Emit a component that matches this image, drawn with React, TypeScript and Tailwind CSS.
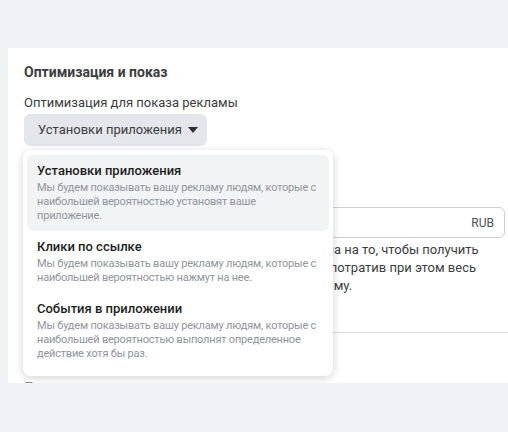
const options = [
  {
    title: "Установки приложения",
    text: "Мы будем показывать вашу рекламу людям, которые с наибольшей вероятностью установят ваше приложение.",
    active: true,
  },
  {
    title: "Клики по ссылке",
    text: "Мы будем показывать вашу рекламу людям, которые с наибольшей вероятностью нажмут на нее.",
    active: false,
  },
  {
    title: "События в приложении",
    text: "Мы будем показывать вашу рекламу людям, которые с наибольшей вероятностью выполнят определенное действие хотя бы раз.",
    active: false,
  },
];

const App = () => {
  return (
    <div
      className="w-[508px] h-[432px] bg-[#f0f2f5] pt-[48px] pl-[8px] overflow-hidden"
      style={{ fontFamily: "Roboto, 'Noto Sans', sans-serif" }}
    >
      <div className="relative h-[335px] bg-white overflow-hidden pl-4 pr-[3px] pt-[14px] text-[#1c1e21]">
        <h2 className="text-[14px] leading-[20px] font-bold text-[#3b3d40]">Оптимизация и показ</h2>
        <div className="mt-[11px] text-[13px] leading-[20px] text-[#3b3d40]">Оптимизация для показа рекламы</div>
        <button className="mt-px flex h-[32px] w-[183px] items-center gap-[6px] whitespace-nowrap rounded-md bg-[#e4e6eb] pl-[14px] text-[13px] text-[#3b3d40]">
          Установки приложения
          <svg width="10" height="6" viewBox="0 0 10 6">
            <path d="M0 0h10L5 6z" fill="#2d2f32" />
          </svg>
        </button>

        <div className="mt-[37px] text-[13px] leading-[20px] text-[#3b3d40]">Контроль затрат (необязательно)</div>
        <div className="mt-[4px] flex h-[31px] items-center justify-end rounded-md border border-[#ccd0d5] pr-[10px] text-[12px] text-[#4b4f56]">
          RUB
        </div>
        <p className="mt-[3px] whitespace-nowrap text-[13px] leading-[18px] text-[#3b3d40]">
          Стратегия ставок Предельные затраты направлена на то, чтобы получить
          <br />
          максимальное количество загрузок программы,{"\u00a0"} потратив при этом весь
          <br />
          бюджет и не превысив при этом назначенную сумму.
        </p>
        <div className="mt-[37px] -mr-[3px] border-t border-[#dadde1]" />
        <div className="mt-[44px] text-[13px] leading-[20px] text-[#8d949e]">Показывать рекламу</div>

        <div className="absolute left-[15px] top-[102px] w-[310px] rounded-lg bg-white px-1 pt-[5px] pb-[7px] shadow-[0_2px_10px_rgba(0,0,0,0.18)]">
          {options.map((o) => (
            <div
              key={o.title}
              className={`rounded-md px-[10px] pt-[6px] pb-[8px] ${o.active ? "bg-[#f2f3f5]" : ""}`}
            >
              <div className="text-[13px] leading-[20px] font-medium text-[#1c1e21]">{o.title}</div>
              <div className="-mr-px text-[11px] leading-[14px] tracking-[-0.2px] text-[#90949c]">{o.text}</div>
            </div>
          ))}
        </div>
      </div>
    </div>
  );
};

export default App;
